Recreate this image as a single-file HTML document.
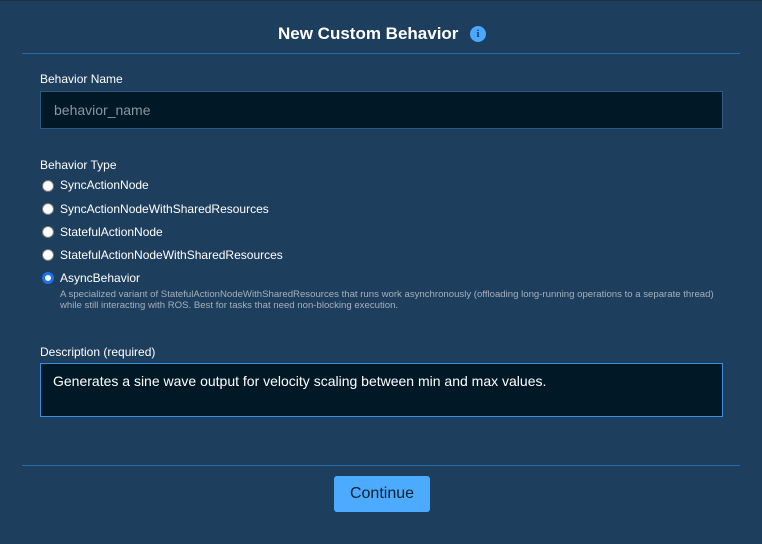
<!DOCTYPE html>
<html><head><style>
*{box-sizing:border-box;margin:0;padding:0}
body{width:762px;height:544px;background:#1e3e5d;font-family:"Liberation Sans",sans-serif;color:#fff;position:relative;overflow:hidden}
.a{position:absolute}
.lbl{font-size:12px;color:#fff}
.r{position:absolute;left:42px;width:12px;height:12px;border-radius:50%;background:#fff;border:1px solid #777}
.rt{position:absolute;left:60px;font-size:12px;color:#fff}
</style></head><body>
<div class="a" style="left:0;top:0;width:762px;height:1px;background:#18324c"></div>
<div class="a" style="left:278px;top:24px;width:186px;font-size:17px;font-weight:bold;white-space:nowrap">New Custom Behavior</div>
<div class="a" style="left:470px;top:26px;width:16px;height:16px;border-radius:50%;background:#4aa8ff;color:#1e3e5d;font-size:11px;font-weight:bold;text-align:center;line-height:16px;font-family:'Liberation Serif',serif">i</div>
<div class="a" style="left:22px;top:53px;width:718px;height:1px;background:#2c6aa6"></div>
<div class="a lbl" style="left:40px;top:72px">Behavior Name</div>
<div class="a" style="left:40px;top:91px;width:683px;height:38px;background:#011826;border:1px solid #2b5a82;font-size:14px;color:#8a96a0;padding:10px 0 0 13px">behavior_name</div>
<div class="a lbl" style="left:40px;top:158px">Behavior Type</div>
<div class="r" style="top:180px"></div><div class="rt" style="top:178px">SyncActionNode</div>
<div class="r" style="top:203px"></div><div class="rt" style="top:202px">SyncActionNodeWithSharedResources</div>
<div class="r" style="top:226px"></div><div class="rt" style="top:225px">StatefulActionNode</div>
<div class="r" style="top:249px"></div><div class="rt" style="top:248px">StatefulActionNodeWithSharedResources</div>
<div class="r" style="top:272px;border:3px solid #1a73e8;background:#fff"></div><div class="rt" style="top:271px">AsyncBehavior</div>
<div class="a" style="left:60px;top:289px;font-size:9.6px;line-height:11px;color:#a6b0ba;width:690px;white-space:nowrap">A specialized variant of StatefulActionNodeWithSharedResources that runs work asynchronously (offloading long-running operations to a separate thread)<br>while still interacting with ROS. Best for tasks that need non-blocking execution.</div>
<div class="a lbl" style="left:40px;top:345px">Description (required)</div>
<div class="a" style="left:40px;top:363px;width:683px;height:54px;background:#011826;border:1px solid #3b8fe0;font-size:14px;color:#fff;padding:9px 0 0 12px">Generates a sine wave output for velocity scaling between min and max values.</div>
<div class="a" style="left:22px;top:465px;width:718px;height:1px;background:#2c6aa6"></div>
<div class="a" style="left:334px;top:476px;width:96px;height:36px;background:#4dabff;border-radius:3px;color:#10202e;font-size:16px;text-align:center;line-height:36px">Continue</div>
</body></html>
